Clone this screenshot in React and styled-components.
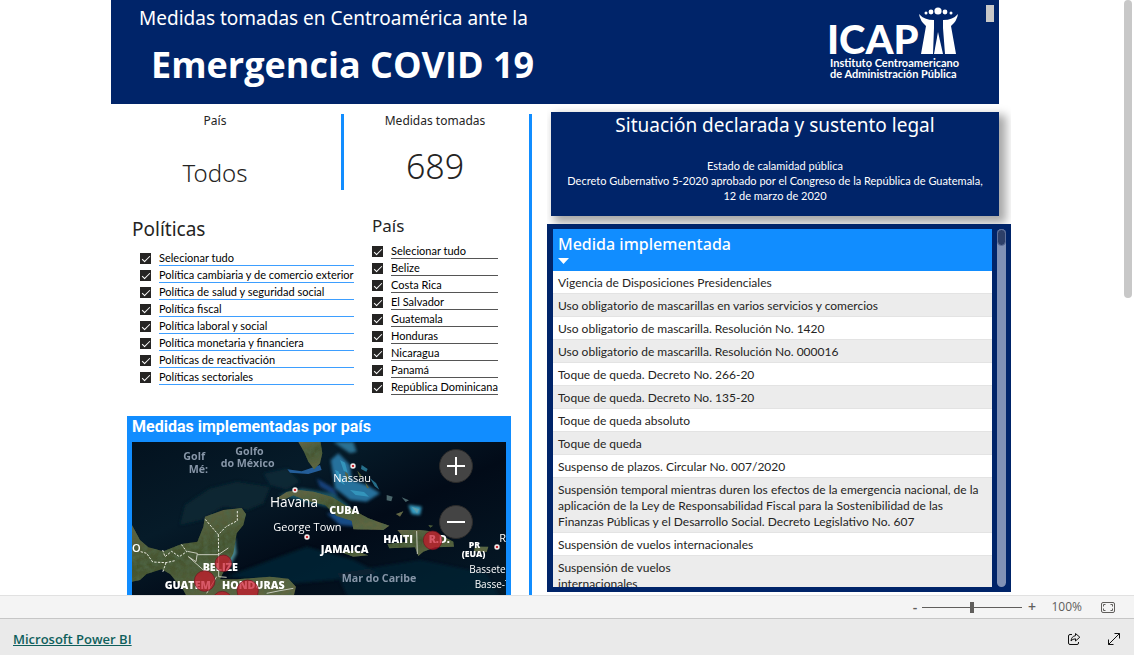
import React, { useState } from 'react';
import styled, { createGlobalStyle } from 'styled-components';

const navy = '#002469';
const blue = '#118dff';
const ink = '#252423';
const humanist = "'Noto Sans', 'Open Sans', sans-serif";
const body = "'Open Sans', 'Noto Sans', sans-serif";
const compact = "Lato, 'Open Sans', sans-serif";

const GlobalStyle = createGlobalStyle`
  * {
    box-sizing: border-box;
  }
  body {
    margin: 0;
    background: #fff;
    color: ${ink};
    font-family: ${body};
  }
  h1, h2, p, ul {
    margin: 0;
    padding: 0;
    font-weight: 400;
  }
`;

const Page = styled.div`
  display: flex;
  flex-direction: column;
  height: 100vh;
`;

const Viewport = styled.main`
  flex: 1;
  min-height: 0;
  display: flex;
  overflow: hidden;
`;

const Canvas = styled.div`
  flex: 1;
  min-width: 0;
`;

const Report = styled.div`
  width: 100%;
  max-width: 900px;
  margin: 0 auto;
`;

const ScrollTrack = styled.div`
  width: 12px;
  padding: 0 2px;
`;

const ScrollThumb = styled.div`
  height: 50%;
  border-radius: 4px;
  background: #c8c8c8;
`;

/* Header */
const Header = styled.header`
  display: flex;
  justify-content: space-between;
  height: 104px;
  margin-right: 12px;
  padding: 5px 5px 0 28px;
  background: ${navy};
  color: #fff;
`;

const Titles = styled.div`
  flex: 1;
`;

const Overline = styled.p`
  font: 400 19px/26px ${humanist};
`;

const MainTitle = styled.h1`
  padding-left: 12px;
  font: 700 36px/48px ${body};
  margin-top: 10px;
`;

const Logo = styled.svg`
  width: 130px;
  height: 80px;
  margin-right: 27px;
  overflow: visible;
`;

const Marker = styled.div`
  width: 8px;
  height: 17px;
  background: #c8c8c8;
`;

/* Body columns */
const Columns = styled.div`
  display: grid;
  grid-template-columns: 436fr 464fr;
`;

const LeftColumn = styled.div`
  display: flex;
  margin: 10px 15px 0 0;
  border-right: 3px solid ${blue};
`;

const LeftContent = styled.div`
  flex: 1;
  min-width: 0;
`;

const Kpis = styled.div`
  display: grid;
  grid-template-columns: 233fr 185fr;
  height: 76px;
`;

const Kpi = styled.section`
  height: 76px;
  text-align: center;
  padding-right: ${(p) => (p.$divided ? '22px' : '3px')};
  border-right: ${(p) => (p.$divided ? `3px solid ${blue}` : 'none')};
`;

const KpiLabel = styled.h2`
  font: 400 12px/14px ${humanist};
`;

const KpiValue = styled.p`
  font: 300 ${(p) => p.$size}px/40px ${humanist};
  margin-top: ${(p) => (p.$low ? '25px' : '18px')};
`;

const Filters = styled.div`
  display: grid;
  grid-template-columns: 222fr 126fr;
  gap: 18px;
  padding: 23px 31px 0 21px;
`;

const Filter = styled.fieldset`
  min-width: 0;
  margin: 0;
  padding: 0;
  border: 0;
`;

const FilterTitle = styled.legend`
  padding: 0;
  font: 400 ${(p) => (p.$large ? '19px/32px' : '17px/25px')} ${humanist};
  color: ${ink};
`;

const Options = styled.ul`
  list-style: none;
  margin: 4px 0 0 ${(p) => (p.$indent ? '8px' : '0')};
`;

const Option = styled.label`
  display: flex;
  align-items: center;
  gap: 8px;
  height: 17px;
`;

const Tick = styled.input`
  appearance: none;
  display: grid;
  place-items: center;
  flex: none;
  width: 11px;
  height: 11px;
  margin: 2px 0 0;
  border: 1px solid ${ink};
  background: #fff;

  &:checked {
    background: ${ink};
  }
  &:checked::after {
    content: '';
    width: 7px;
    height: 3px;
    border: solid #fff;
    border-width: 0 0 1px 1px;
    transform: rotate(-45deg);
    margin-bottom: 2px;
  }
`;

const OptionText = styled.span`
  flex: 1;
  height: 16px;
  border-bottom: 1px solid ${(p) => p.$line};
  font: 400 11px/16px ${compact};
  color: #000;
  white-space: nowrap;
`;

/* Map */
const MapPanel = styled.section`
  margin: 21px 18px 0 16px;
  padding: 0 5px 5px;
  background: ${blue};
`;

const MapTitle = styled.h2`
  height: 26px;
  font: 700 16px/22px Roboto, sans-serif;
  color: #fff;
`;

const MapArea = styled.div`
  position: relative;
`;

const MapDrawing = styled.svg`
  display: block;
  width: 100%;
  font-family: ${body};
`;

const MapButtons = styled.div`
  position: absolute;
  top: 7px;
  right: 33px;
  display: grid;
  gap: 22px;
`;

const MapButton = styled.button`
  display: grid;
  place-items: center;
  width: 34px;
  height: 34px;
  padding: 0;
  border: 1px solid #2b2b2b;
  border-radius: 50%;
  background: #444;
`;

/* Right column */
const RightColumn = styled.div`
  min-width: 0;
  padding-top: 8px;
  overflow: hidden;
`;

const LegalCard = styled.section`
  height: 104px;
  margin: 0 12px 8px 4px;
  background: ${navy};
  color: #fff;
  text-align: center;
  box-shadow: 5px 5px 9px 2px rgba(0, 0, 0, 0.35);
`;

const LegalTitle = styled.h2`
  font: 400 19px/27px ${humanist};
`;

const LegalText = styled.p`
  margin-top: 19px;
  font: 400 11px/15px ${compact};
`;

const TablePanel = styled.section`
  position: relative;
  display: flex;
  gap: 5px;
  height: 368px;
  padding: 5px 5px 5px 6px;
  background: ${navy};
`;

const TableClip = styled.div`
  flex: 1;
  overflow: hidden;
  background: #fff;
`;

const Table = styled.table`
  width: 100%;
  border-collapse: collapse;
`;

const HeadCell = styled.th`
  height: 42px;
  padding: 4px 5px 0;
  background: ${blue};
  color: #fff;
  text-align: left;
  vertical-align: top;
  font: 500 16px/22px ${humanist};
`;

const SortArrow = styled.svg`
  display: block;
  width: 11px;
  height: 6px;
  margin-top: 3px;
`;

const Row = styled.tr`
  background: #fff;
  &:nth-child(even) {
    background: #ececec;
  }
`;

const Cell = styled.td`
  padding: 4px 5px 2px;
  border-bottom: 1px solid #e3e3e3;
  font: 400 12px/16px ${compact};
  white-space: pre-line;
`;

const TableTrack = styled.div`
  width: 9px;
  border-radius: 5px;
  background: #8091b5;
`;

const TableThumb = styled.div`
  height: 17px;
  border: 1px solid #5f719b;
  border-radius: 5px;
  background: #2d3f68;
`;

/* Bottom bars */
const ZoomBar = styled.div`
  display: flex;
  align-items: center;
  justify-content: flex-end;
  height: 24px;
  padding-right: 19px;
  border-top: 1px solid #e1e1e1;
  border-bottom: 1px solid #c6c6c6;
  background: #f4f4f4;
  color: #605e5c;
`;

const ZoomStep = styled.button`
  width: 10px;
  padding: 0;
  border: 0;
  background: none;
  color: inherit;
  font: 600 14px/20px ${body};
`;

const ZoomSlider = styled.input`
  appearance: none;
  width: 100px;
  height: 12px;
  margin: 0 5px 0 2px;
  background: linear-gradient(#605e5c, #605e5c) center / 100% 1px no-repeat;

  &::-webkit-slider-thumb {
    appearance: none;
    width: 4px;
    height: 11px;
    background: #605e5c;
  }
`;

const ZoomValue = styled.output`
  width: 45px;
  text-align: right;
  font: 400 12px/20px ${body};
`;

const IconButton = styled.button`
  display: grid;
  place-items: center;
  padding: 0;
  border: 0;
  background: none;
  color: inherit;
  margin-left: ${(p) => p.$gap}px;
`;

const Footer = styled.footer`
  display: flex;
  align-items: center;
  height: 36px;
  padding: 4px 13px 0;
  background: #eaeaea;
  color: #000;
`;

const BrandLink = styled.a`
  margin-right: auto;
  color: #0f5f5c;
  font: 600 13px/20px ${body};
`;

const policies = [
  'Selecionar tudo',
  'Política cambiaria y de comercio exterior',
  'Política de salud y seguridad social',
  'Política fiscal',
  'Política laboral y social',
  'Política monetaria y financiera',
  'Políticas de reactivación',
  'Políticas sectoriales',
];

const countries = [
  'Selecionar tudo',
  'Belize',
  'Costa Rica',
  'El Salvador',
  'Guatemala',
  'Honduras',
  'Nicaragua',
  'Panamá',
  'República Dominicana',
];

const measures = [
  'Vigencia de Disposiciones Presidenciales',
  'Uso obligatorio de mascarillas en varios servicios y comercios',
  'Uso obligatorio de mascarilla. Resolución No. 1420',
  'Uso obligatorio de mascarilla. Resolución No. 000016',
  'Toque de queda. Decreto No. 266-20',
  'Toque de queda. Decreto No. 135-20',
  'Toque de queda absoluto',
  'Toque de queda',
  'Suspenso de plazos. Circular No. 007/2020',
  'Suspensión temporal mientras duren los efectos de la emergencia nacional, de la aplicación de la Ley de Responsabilidad Fiscal para la Sostenibilidad de las Finanzas Públicas y el Desarrollo Social. Decreto Legislativo No. 607',
  'Suspensión de vuelos internacionales',
  'Suspensión de vuelos\ninternacionales',
];

function CheckList({ title, items, large, line }) {
  return (
    <Filter>
      <FilterTitle $large={large}>{title}</FilterTitle>
      <Options $indent={large}>
        {items.map((item) => (
          <li key={item}>
            <Option>
              <Tick type="checkbox" defaultChecked />
              <OptionText $line={line}>{item}</OptionText>
            </Option>
          </li>
        ))}
      </Options>
    </Filter>
  );
}

function IcapLogo() {
  return (
    <Logo viewBox="0 0 130 80" fill="#fff" role="img" aria-label="ICAP">
      <text x="-2" y="49" fontFamily="Lato" fontWeight="900" fontSize="40">ICAP</text>
      <circle cx="97" cy="8" r="1.5" />
      <circle cx="102" cy="7" r="2.4" />
      <circle cx="109" cy="6" r="3.6" />
      <circle cx="116" cy="7" r="2.4" />
      <circle cx="122" cy="8" r="1.5" />
      <path d="M90 9 Q95 15 105 15 L105 23 L104 49 L92 49 L97 21 Q91 16 90 9Z" />
      <path d="M129 9 Q124 15 114 15 L114 23 L116 49 L127 49 L122 21 Q128 16 129 9Z" />
      <path d="M109 27 L114 49 L105 49Z" />
      <text x="1" y="62" fontFamily="Lato" fontWeight="700" fontSize="11">Instituto Centroamericano</text>
      <text x="1" y="73" fontFamily="Lato" fontWeight="700" fontSize="11">de Administración Pública</text>
    </Logo>
  );
}

function City({ x, y }) {
  return (
    <g>
      <circle cx={x} cy={y} r="8" fill="#fff" stroke="#888" strokeWidth="1" />
      <circle cx={x} cy={y} r="4" fill="#c3272f" />
    </g>
  );
}

function CaribbeanMap() {
  return (
    <MapDrawing viewBox="36 96 1122 510" role="img" aria-label="Medidas implementadas por país">
      <defs>
        <linearGradient id="sea" x1="0" y1="0" x2="1" y2="1">
          <stop offset="0" stopColor="#03121f" />
          <stop offset="0.3" stopColor="#061b29" />
          <stop offset="0.55" stopColor="#020b18" />
          <stop offset="1" stopColor="#051b29" />
        </linearGradient>
        <linearGradient id="land" x1="0" y1="0" x2="0.4" y2="1">
          <stop offset="0" stopColor="#6d6a4b" />
          <stop offset="0.5" stopColor="#44542f" />
          <stop offset="1" stopColor="#5f6642" />
        </linearGradient>
        <filter id="soft" x="-30%" y="-30%" width="160%" height="160%">
          <feGaussianBlur stdDeviation="5" />
        </filter>
        <filter id="terrain" x="0" y="0" width="100%" height="100%">
          <feTurbulence type="fractalNoise" baseFrequency="0.06" numOctaves="3" seed="4" result="n" />
          <feColorMatrix in="n" values="0 0 0 0 0.08  0 0 0 0 0.13  0 0 0 0 0.06  1.8 0 0 0 -0.6" result="d" />
          <feComposite in="d" in2="SourceGraphic" operator="in" result="shade" />
          <feMerge>
            <feMergeNode in="SourceGraphic" />
            <feMergeNode in="shade" />
          </feMerge>
        </filter>
      </defs>
      <rect x="36" y="96" width="1122" height="510" fill="url(#sea)" />
      <g filter="url(#soft)">
        <path d="M180 345 L195 285 L270 235 L350 215 L450 230 L430 280 L385 300 L310 290 L245 330Z" fill="#0b2731" />
        <path d="M430 190 L500 175 L540 215 L500 240 L450 225Z" fill="#0b2a3a" opacity="0.8" />
        <path d="M320 500 L560 410 L700 450 L780 490 L640 510 L520 520Z" fill="#09283a" opacity="0.7" />
        <path d="M650 490 L900 450 L1100 490 L1158 600 L700 600Z" fill="#082536" opacity="0.6" />
        <path d="M632 150 L655 130 L690 165 L695 210 L740 225 L780 250 L740 275 L690 270 L645 235Z" fill="#28719c" />
        <path d="M640 96 L700 96 L710 125 L690 130Z" fill="#2a7192" />
        <path d="M590 205 L640 235 L655 260 L600 230Z" fill="#15427d" />
        <path d="M620 310 L690 310 L715 350 L660 345Z" fill="#174b86" />
        <path d="M475 255 L545 235 L640 250 L690 290 L660 300Z" fill="#1f6373" opacity="0.8" />
        <path d="M865 285 L905 290 L900 315 L875 312Z" fill="#37a0c6" />
        <path d="M345 380 L350 430 L325 480 L315 450Z" fill="#4a8790" />
      </g>
      <g fill="#3cacd0" opacity="0.6">
        <path d="M660 150 l15 8 8 30 -12 -6z M725 165 l18 12 -4 8 -16 -8z M750 205 l18 14 10 20 -14 -10z M645 180 l10 4 20 42 -18 -12z M690 240 l42 6 15 14 -40 -5z" />
        <path d="M800 255 l18 5 -4 14 -14 -3z M845 262 l22 9 -10 5z M875 290 l22 8 -6 12z" fill="#7aa0a0" />
      </g>
      <path d="M502 178 L545 184 L600 165 L605 180 L565 192 L510 188Z" fill="#245d98" />
      <g fill="url(#land)" filter="url(#terrain)">
        <path d="M535 96 L602 96 L607 130 L600 160 L582 178 L565 155 L552 125Z" />
        <path d="M675 185 l8 6 4 26 -8 -8z M712 182 l12 14 -4 10z M735 215 l12 18 -6 2z" />
        <path d="M468 266 L500 246 L535 240 L580 245 L635 260 L675 285 L710 305 L745 325 L808 347 L790 360 L700 358 L695 332 L650 318 L615 285 L560 272 L520 256 L495 268Z" />
        <path d="M36 345 L60 390 L85 412 L130 424 L185 402 L232 395 L250 350 L255 320 L310 300 L365 294 L378 312 L370 345 L350 370 L340 430 L318 470 L300 508 L350 508 L450 500 L505 506 L528 530 L510 606 L225 606 L190 540 L150 492 L125 478 L80 492 L60 510 L36 515Z" />
        <path d="M660 425 L705 422 L745 436 L700 440Z" />
        <path d="M832 360 L900 360 L945 365 L1000 395 L1002 410 L945 412 L910 425 L895 438 L885 412 L808 415 L802 402 L862 395Z" />
        <path d="M1065 410 L1105 410 L1100 426 L1062 424Z M828 312 l22 -8 -10 16z M925 345 l14 2 -8 6z" />
      </g>
      <g fill="none" stroke="#e8eadf" strokeWidth="3" strokeDasharray="7 4">
        <path d="M352 303 L352 332 L318 350 L295 374 L253 325 M295 374 L296 435" />
        <path d="M62 425 L80 430 L98 456 L138 458 L165 452 M128 420 L135 440 L155 424 L178 440 L200 425 L184 403 M138 458 L128 487" />
      </g>
      <g fill="none" stroke="#c5c9bb" strokeWidth="3">
        <path d="M202 424 L232 430 L228 455 L205 440 M232 434 L295 434 L325 414 M296 434 L296 500 L320 502 M205 440 L250 480 M290 500 L260 550 M440 550 L480 542 L520 535 M890 363 L892 432" />
      </g>
      <g fill="#8796a8" fontWeight="700" fontSize="32">
        <text x="190" y="150">Golf</text>
        <text x="206" y="188">Mé:</text>
        <text x="346" y="135">Golfo</text>
        <text x="302" y="171">do México</text>
        <text x="665" y="517">Mar do Caribe</text>
      </g>
      <g fill="#fff" fontSize="33">
        <text x="640" y="215">Nassau</text>
        <text x="450" y="292" fontSize="41">Havana</text>
        <text x="460" y="363">George Town</text>
        <text x="1138" y="396">R</text>
        <text x="1048" y="488" fontSize="30">Bassete</text>
        <text x="1064" y="535" fontSize="30">Basse-T</text>
        <text x="36" y="426" fontWeight="600">O</text>
      </g>
      <g fill="#fff" fontWeight="800" fontSize="32">
        <text x="628" y="313">CUBA</text>
        <text x="602" y="429">JAMAICA</text>
        <text x="790" y="398">HAITI</text>
        <text x="1046" y="413" fontSize="26">PR</text>
        <text x="1025" y="440" fontSize="26">(EUA)</text>
        <text x="134" y="536">GUATEM</text>
        <text x="306" y="536">HONDURAS</text>
        <text x="248" y="482">BELIZE</text>
        <text x="926" y="398">R.D.</text>
      </g>
      <g fill="#c9182b" fillOpacity="0.72" stroke="#6f1420" strokeWidth="2">
        <circle cx="310" cy="460" r="25" />
        <circle cx="254" cy="513" r="31" />
        <circle cx="383" cy="542" r="32" />
        <circle cx="307" cy="573" r="29" />
        <circle cx="938" cy="391" r="28" />
      </g>
      <City x={699} y={168} />
      <City x={525} y={240} />
      <City x={561} y={381} />
      <City x={1131} y={411} />
    </MapDrawing>
  );
}

export default function App() {
  const [zoom, setZoom] = useState(100);

  return (
    <Page>
      <GlobalStyle />
      <Viewport>
        <Canvas>
          <Report>
            <Header>
              <Titles>
                <Overline>Medidas tomadas en Centroamérica ante la</Overline>
                <MainTitle>Emergencia COVID 19</MainTitle>
              </Titles>
              <IcapLogo />
              <Marker />
            </Header>
            <Columns>
              <LeftColumn>
                <LeftContent>
                  <Kpis>
                    <Kpi $divided>
                      <KpiLabel>País</KpiLabel>
                      <KpiValue $size={24} $low>Todos</KpiValue>
                    </Kpi>
                    <Kpi>
                      <KpiLabel>Medidas tomadas</KpiLabel>
                      <KpiValue $size={34}>689</KpiValue>
                    </Kpi>
                  </Kpis>
                  <Filters>
                    <CheckList title="Políticas" items={policies} line="#3d9eff" large />
                    <CheckList title="País" items={countries} line="#555" />
                  </Filters>
                  <MapPanel>
                    <MapTitle>Medidas implementadas por país</MapTitle>
                    <MapArea>
                      <CaribbeanMap />
                      <MapButtons>
                        <MapButton type="button" aria-label="Acercar">
                          <svg width="18" height="18" stroke="#fff" strokeWidth="2">
                            <path d="M0 9 H18 M9 0 V18" />
                          </svg>
                        </MapButton>
                        <MapButton type="button" aria-label="Alejar">
                          <svg width="18" height="18" stroke="#fff" strokeWidth="2">
                            <path d="M0 9 H18" />
                          </svg>
                        </MapButton>
                      </MapButtons>
                    </MapArea>
                  </MapPanel>
                </LeftContent>
              </LeftColumn>
              <RightColumn>
                <LegalCard>
                  <LegalTitle>Situación declarada y sustento legal</LegalTitle>
                  <LegalText>
                    Estado de calamidad pública
                    <br />
                    Decreto Gubernativo 5-2020 aprobado por el Congreso de la República de Guatemala,
                    <br />
                    12 de marzo de 2020
                  </LegalText>
                </LegalCard>
                <TablePanel>
                  <TableClip>
                    <Table>
                      <thead>
                        <tr>
                          <HeadCell>
                            Medida implementada
                            <SortArrow viewBox="0 0 11 6">
                              <path d="M0 0 H11 L5.5 6Z" fill="#fff" />
                            </SortArrow>
                          </HeadCell>
                        </tr>
                      </thead>
                      <tbody>
                        {measures.map((measure) => (
                          <Row key={measure}>
                            <Cell>{measure}</Cell>
                          </Row>
                        ))}
                      </tbody>
                    </Table>
                  </TableClip>
                  <TableTrack>
                    <TableThumb />
                  </TableTrack>
                </TablePanel>
              </RightColumn>
            </Columns>
          </Report>
        </Canvas>
        <ScrollTrack>
          <ScrollThumb />
        </ScrollTrack>
      </Viewport>
      <ZoomBar>
        <ZoomStep type="button" aria-label="Reducir" onClick={() => setZoom(zoom - 10)}>-</ZoomStep>
        <ZoomSlider
          type="range"
          min="0"
          max="200"
          value={zoom}
          aria-label="Zoom"
          onChange={(e) => setZoom(Number(e.target.value))}
        />
        <ZoomStep type="button" aria-label="Ampliar" onClick={() => setZoom(zoom + 10)}>+</ZoomStep>
        <ZoomValue>{zoom}%</ZoomValue>
        <IconButton type="button" aria-label="Ajustar a la página" $gap={19}>
          <svg width="14" height="11" fill="none" stroke="#605e5c">
            <rect x="0.5" y="0.5" width="13" height="10" rx="1.5" />
            <path d="M2.5 4.5 V2.5 H4.5 M9.5 2.5 H11.5 V4.5 M11.5 6.5 V8.5 H9.5 M4.5 8.5 H2.5 V6.5" />
          </svg>
        </IconButton>
      </ZoomBar>
      <Footer>
        <BrandLink href="#powerbi">Microsoft Power BI</BrandLink>
        <IconButton type="button" aria-label="Compartir" $gap={0}>
          <svg width="14" height="14" fill="none" stroke="#111" strokeLinejoin="round">
            <path d="M5 2.5 H3 Q1.5 2.5 1.5 4 V11 Q1.5 12.5 3 12.5 H10 Q11.5 12.5 11.5 11 V10" />
            <path d="M8.5 1.5 L12.8 5.2 L8.5 9 V6.8 Q5.5 6.8 4 9 Q4.5 4.2 8.5 3.7Z" />
          </svg>
        </IconButton>
        <IconButton type="button" aria-label="Pantalla completa" $gap={26}>
          <svg width="14" height="14" fill="none" stroke="#111">
            <path d="M1.5 12.5 L12.5 1.5 M7.5 1.5 H12.5 V6.5 M1.5 7.5 V12.5 H6.5" />
          </svg>
        </IconButton>
      </Footer>
    </Page>
  );
}
